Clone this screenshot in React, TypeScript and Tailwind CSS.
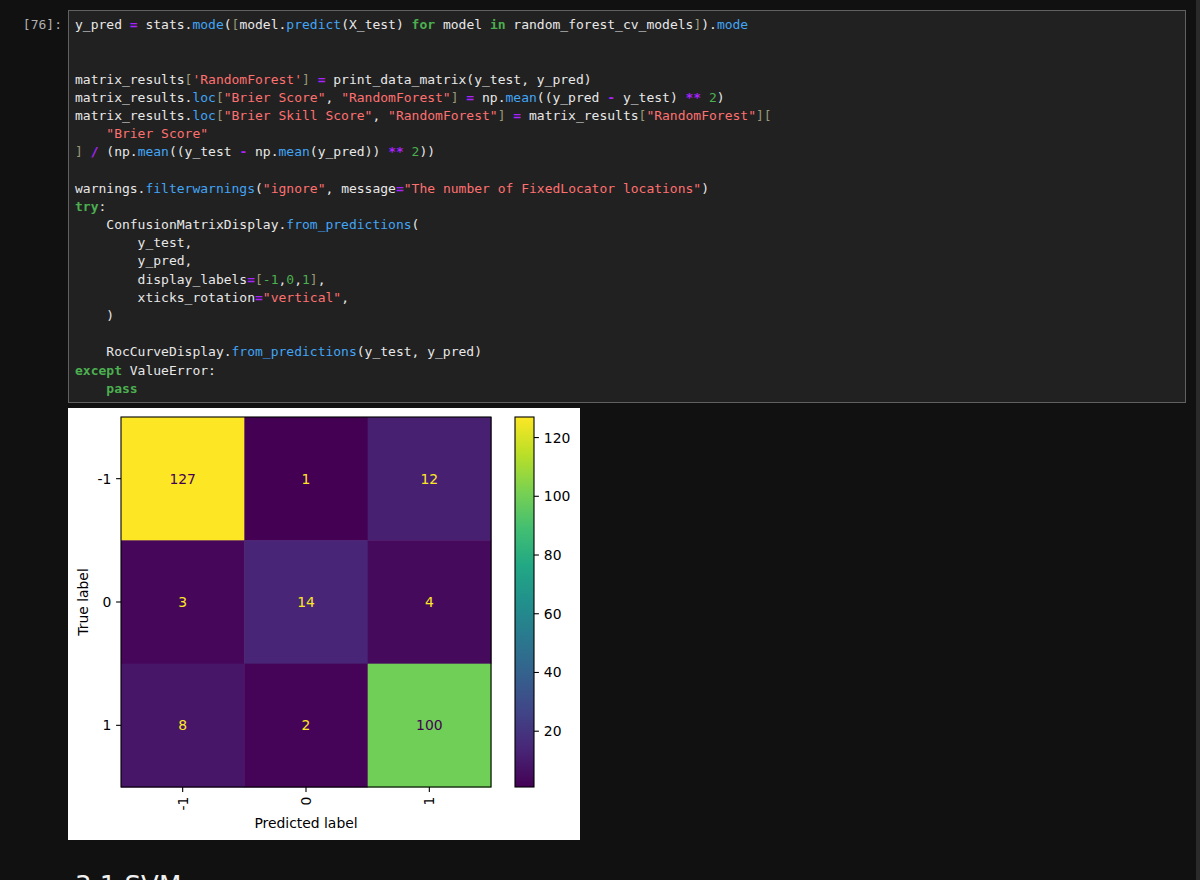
const C: Record<string, string> = {
  d: 'text-[#e8e8e8]',
  o: 'text-[#aa22ff] font-bold',
  p: 'text-[#42a5f5]',
  s: 'text-[#ff7070]',
  k: 'text-[#4caf50] font-bold',
  b: 'text-[#999977]',
  n: 'text-[#4caf50]',
}

type Tok = [string, string]

const lines: Tok[][] = [
  [['d', 'y_pred '], ['o', '='], ['d', ' stats.'], ['p', 'mode'], ['d', '('], ['b', '['], ['d', 'model.'], ['p', 'predict'], ['d', '(X_test) '], ['k', 'for'], ['d', ' model '], ['k', 'in'], ['d', ' random_forest_cv_models'], ['b', ']'], ['d', ').'], ['p', 'mode']],
  [],
  [],
  [['d', 'matrix_results'], ['b', '['], ['s', "'RandomForest'"], ['b', ']'], ['d', ' '], ['o', '='], ['d', ' print_data_matrix(y_test, y_pred)']],
  [['d', 'matrix_results.'], ['p', 'loc'], ['b', '['], ['s', '"Brier Score"'], ['d', ', '], ['s', '"RandomForest"'], ['b', ']'], ['d', ' '], ['o', '='], ['d', ' np.'], ['p', 'mean'], ['d', '((y_pred '], ['o', '-'], ['d', ' y_test) '], ['o', '**'], ['d', ' '], ['n', '2'], ['d', ')']],
  [['d', 'matrix_results.'], ['p', 'loc'], ['b', '['], ['s', '"Brier Skill Score"'], ['d', ', '], ['s', '"RandomForest"'], ['b', ']'], ['d', ' '], ['o', '='], ['d', ' matrix_results'], ['b', '['], ['s', '"RandomForest"'], ['b', '][']],
  [['d', '    '], ['s', '"Brier Score"']],
  [['b', ']'], ['d', ' '], ['o', '/'], ['d', ' (np.'], ['p', 'mean'], ['d', '((y_test '], ['o', '-'], ['d', ' np.'], ['p', 'mean'], ['d', '(y_pred)) '], ['o', '**'], ['d', ' '], ['n', '2'], ['d', '))']],
  [],
  [['d', 'warnings.'], ['p', 'filterwarnings'], ['d', '('], ['s', '"ignore"'], ['d', ', message'], ['o', '='], ['s', '"The number of FixedLocator locations"'], ['d', ')']],
  [['k', 'try'], ['d', ':']],
  [['d', '    ConfusionMatrixDisplay.'], ['p', 'from_predictions'], ['d', '(']],
  [['d', '        y_test,']],
  [['d', '        y_pred,']],
  [['d', '        display_labels'], ['o', '='], ['b', '['], ['n', '-1'], ['d', ','], ['n', '0'], ['d', ','], ['n', '1'], ['b', ']'], ['d', ',']],
  [['d', '        xticks_rotation'], ['o', '='], ['s', '"vertical"'], ['d', ',']],
  [['d', '    )']],
  [],
  [['d', '    RocCurveDisplay.'], ['p', 'from_predictions'], ['d', '(y_test, y_pred)']],
  [['k', 'except'], ['d', ' ValueError:']],
  [['d', '    '], ['k', 'pass']],
]

// confusion matrix values + viridis colours (vmin 1, vmax 127)
const cells = [
  [{ v: 127, bg: '#fde725', fg: '#440154' }, { v: 1, bg: '#440154', fg: '#fde725' }, { v: 12, bg: '#482071', fg: '#fde725' }],
  [{ v: 3, bg: '#46075a', fg: '#fde725' }, { v: 14, bg: '#482576', fg: '#fde725' }, { v: 4, bg: '#460a5d', fg: '#fde725' }],
  [{ v: 8, bg: '#481668', fg: '#fde725' }, { v: 2, bg: '#450457', fg: '#fde725' }, { v: 100, bg: '#70cf57', fg: '#440154' }],
]

const viridis = ['#440154', '#482576', '#414487', '#35608d', '#2a788e', '#21908c', '#22a884', '#43bf71', '#7ad151', '#bbdf27', '#fde725']

function ConfusionFigure() {
  const x0 = 53
  const y0 = 9
  const size = 370
  const cs = size / 3
  const labels = ['-1', '0', '1']
  const font = { fontFamily: 'DejaVu Sans, sans-serif', fontSize: 13.9 }
  const cbY = (v: number) => y0 + size - ((v - 1) / 126) * size
  return (
    <svg width={512} height={432} viewBox="0 0 512 432" style={font}>
      <defs>
        <linearGradient id="vir" x1="0" y1="1" x2="0" y2="0">
          {viridis.map((c, i) => (
            <stop key={c} offset={i / 10} stopColor={c} />
          ))}
        </linearGradient>
      </defs>
      <rect width={512} height={432} fill="#fff" />
      {cells.map((row, r) =>
        row.map((c, k) => (
          <g key={`${r}-${k}`}>
            <rect x={x0 + k * cs} y={y0 + r * cs} width={cs + 0.5} height={cs + 0.5} fill={c.bg} />
            <text x={x0 + k * cs + cs / 2} y={y0 + r * cs + cs / 2} fill={c.fg} textAnchor="middle" dominantBaseline="central">
              {c.v}
            </text>
          </g>
        )),
      )}
      <rect x={x0} y={y0} width={size} height={size} fill="none" stroke="#000" strokeWidth={1.1} />
      {labels.map((l, i) => {
        const cy = y0 + i * cs + cs / 2
        const cx = x0 + i * cs + cs / 2
        return (
          <g key={l}>
            <line x1={x0 - 4.9} x2={x0} y1={cy} y2={cy} stroke="#000" strokeWidth={1.1} />
            <text x={x0 - 9.7} y={cy} textAnchor="end" dominantBaseline="central" fill="#000">
              {l}
            </text>
            <line x1={cx} x2={cx} y1={y0 + size} y2={y0 + size + 4.9} stroke="#000" strokeWidth={1.1} />
            <text x={cx} y={y0 + size + 9.7} textAnchor="end" dominantBaseline="central" fill="#000" transform={`rotate(-90 ${cx} ${y0 + size + 9.7})`}>
              {l}
            </text>
          </g>
        )
      })}
      <text x={x0 + size / 2} y={415} textAnchor="middle" dominantBaseline="central" fill="#000">
        Predicted label
      </text>
      <text x={15} y={y0 + size / 2} textAnchor="middle" dominantBaseline="central" fill="#000" transform={`rotate(-90 15 ${y0 + size / 2})`}>
        True label
      </text>
      <rect x={447} y={y0} width={19} height={size} fill="url(#vir)" stroke="#000" strokeWidth={1.1} />
      {[20, 40, 60, 80, 100, 120].map((v) => (
        <g key={v}>
          <line x1={466} x2={470.9} y1={cbY(v)} y2={cbY(v)} stroke="#000" strokeWidth={1.1} />
          <text x={475.8} y={cbY(v)} dominantBaseline="central" fill="#000">
            {v}
          </text>
        </g>
      ))}
    </svg>
  )
}

export default function App() {
  return (
    <div className="flex h-[880px] w-[1200px] overflow-hidden bg-[#111111]">
      <div className="flex-1 pt-[10px]">
        <div className="flex">
          <div className="w-[68px] shrink-0 pr-[6px] pt-[6px] text-right font-['DejaVu_Sans_Mono',monospace] text-[13px] leading-[18.2px] text-[#b0b0b0]">
            [76]:
          </div>
          <div className="mr-[10px] flex-1 border border-[#616161] bg-[#212121] px-[6px] pt-[5px] pb-[4px] font-['DejaVu_Sans_Mono',monospace] text-[13px] leading-[18.2px]">
            {lines.map((toks, i) => (
              <div key={i} className="h-[18.2px] whitespace-pre">
                {toks.map(([t, s], j) => (
                  <span key={j} className={C[t]}>
                    {s}
                  </span>
                ))}
              </div>
            ))}
          </div>
        </div>
        <div className="pl-[68px] pt-[5px]">
          <ConfusionFigure />
        </div>
        <h2 className="mt-[31px] pl-[75px] font-['DejaVu_Sans',sans-serif] text-[26px] leading-[1.2] text-[#f0f0f0]">3.1 SVM</h2>
      </div>
      <div className="w-[4px] bg-[#2a2a2a]" />
    </div>
  )
}
